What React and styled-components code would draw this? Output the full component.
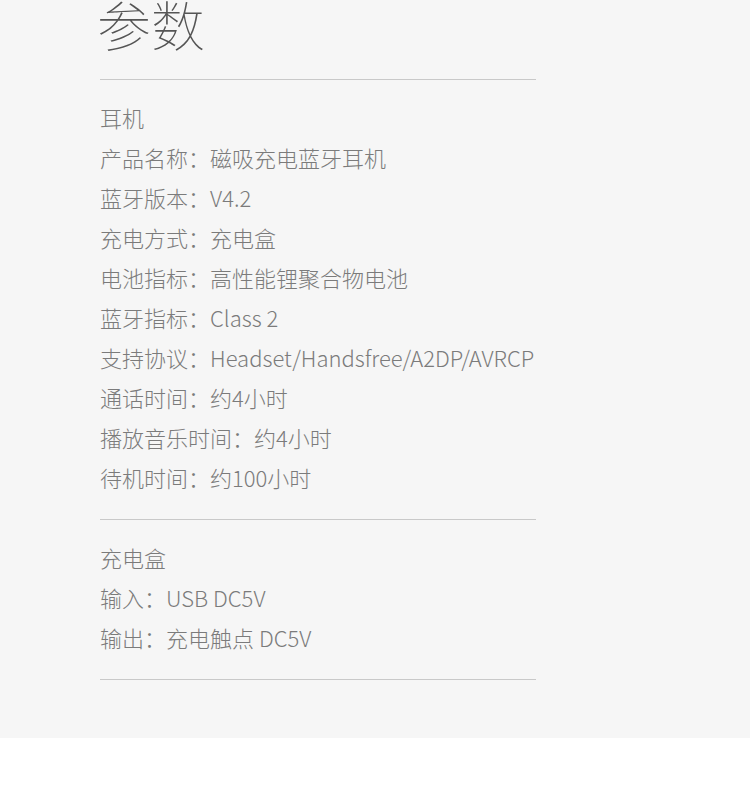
import styled, { createGlobalStyle } from "styled-components";

const GlobalStyle = createGlobalStyle`
  html, body {
    margin: 0;
    padding: 0;
    background: #fff;
  }
  body {
    font-family: "Noto Sans CJK SC", "Noto Sans", sans-serif;
  }
`;

const specs = [
  {
    title: "耳机",
    items: [
      ["产品名称", "磁吸充电蓝牙耳机"],
      ["蓝牙版本", "V4.2"],
      ["充电方式", "充电盒"],
      ["电池指标", "高性能锂聚合物电池"],
      ["蓝牙指标", "Class 2"],
      ["支持协议", "Headset/Handsfree/A2DP/AVRCP"],
      ["通话时间", "约4小时"],
      ["播放音乐时间", "约4小时"],
      ["待机时间", "约100小时"],
    ],
  },
  {
    title: "充电盒",
    items: [
      ["输入", "USB DC5V"],
      ["输出", "充电触点 DC5V"],
    ],
  },
];

export default function App() {
  return (
    <>
      <GlobalStyle />
      <Page>
        <Content>
          <Heading>参数</Heading>
          <Divider />
          {specs.map((group) => (
            <Section key={group.title}>
              <Group>
                <Row>{group.title}</Row>
                {group.items.map(([label, value]) => (
                  <Row key={label}>
                    {label}：{value}
                  </Row>
                ))}
              </Group>
              <Divider />
            </Section>
          ))}
        </Content>
      </Page>
    </>
  );
}

const Page = styled.div`
  background-color: #f6f6f6;
  height: 738px;
  overflow: hidden;
`;

const Content = styled.div`
  width: 436px;
  margin-left: 100px;
  display: flex;
  flex-direction: column;
`;

const Heading = styled.h1`
  margin: -6px 0 0 -3px;
  font-size: 54px;
  line-height: 60px;
  font-weight: 100;
  color: #555;
  height: 60px;
`;

const Divider = styled.div`
  height: 1px;
  background-color: #c9c9c9;
  margin-top: 19px;

  ${Heading} + & {
    margin-top: 25px;
  }
`;

const Section = styled.div`
  display: flex;
  flex-direction: column;
`;

const Group = styled.div`
  padding-top: 17px;
  padding-bottom: 3px;
`;

const Row = styled.p`
  margin: 0;
  font-size: 22px;
  line-height: 40px;
  font-weight: 300;
  color: #7b7b7b;
  white-space: nowrap;
`;
